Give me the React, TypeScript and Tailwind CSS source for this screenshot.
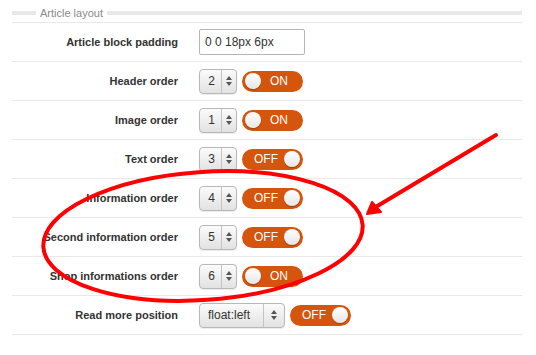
import React from "react";

function Spinner({ value, wide }: { value: string; wide?: boolean }) {
  return (
    <div
      className={
        "flex h-[25px] items-stretch rounded-[4px] border border-[#b8b8b8] bg-gradient-to-b from-[#fbfbfb] to-[#e2e2e2] shadow-[0_1px_1px_rgba(0,0,0,0.08)] " +
        (wide ? "w-[86px]" : "w-[38px]")
      }
    >
      <div
        className={
          "flex items-center text-[12px] text-[#333] " +
          (wide ? "w-[63px] pl-[8px]" : "w-[21px] justify-center pl-[2px]")
        }
      >
        {value}
      </div>
      <div className="w-px bg-[#c4c4c4]" />
      <div className="flex flex-1 flex-col items-center justify-center gap-[2px]">
        <svg width="6" height="4" viewBox="0 0 6 4">
          <path d="M3 0 L6 4 L0 4 Z" fill="#555" />
        </svg>
        <svg width="6" height="4" viewBox="0 0 6 4">
          <path d="M0 0 L6 0 L3 4 Z" fill="#555" />
        </svg>
      </div>
    </div>
  );
}

function Toggle({ on }: { on: boolean }) {
  return (
    <div className="flex h-[21px] w-[61px] items-center rounded-full bg-[#d6550c] px-[3px]">
      {on ? (
        <>
          <div className="h-[16px] w-[16px] rounded-full bg-gradient-to-b from-white to-[#e6e6e6] shadow-[0_1px_1px_rgba(0,0,0,0.3)]" />
          <span className="ml-[9px] text-[12px] text-white">ON</span>
        </>
      ) : (
        <>
          <span className="ml-[9px] text-[12px] text-white">OFF</span>
          <div className="ml-auto h-[16px] w-[16px] rounded-full bg-gradient-to-b from-white to-[#e6e6e6] shadow-[0_1px_1px_rgba(0,0,0,0.3)]" />
        </>
      )}
    </div>
  );
}

function Row({ label, children }: { label: string; children: React.ReactNode }) {
  return (
    <div className="flex h-[39px] items-center border-b border-[#e9e9e9]">
      <div className="w-[166px] text-right text-[11px] font-bold text-[#333]">{label}</div>
      <div className="ml-[21px] flex items-center gap-[5px]">{children}</div>
    </div>
  );
}

export default function App() {
  const rows: { label: string; n: string; on: boolean }[] = [
    { label: "Header order", n: "2", on: true },
    { label: "Image order", n: "1", on: true },
    { label: "Text order", n: "3", on: false },
    { label: "Information order", n: "4", on: false },
    { label: "Second information order", n: "5", on: false },
    { label: "Shop informations order", n: "6", on: true },
  ];
  return (
    <div className="relative h-[355px] w-[536px] overflow-hidden bg-white font-['Liberation_Sans',Arial,sans-serif]">
      <div className="ml-[12px] w-[510px]">
        <div className="flex h-[23px] items-center border-b border-[#e9e9e9] pt-[4px]">
          <div className="h-[4px] w-[24px] bg-[#e8e8e8]" />
          <span className="px-[4px] text-[11px] text-[#8a8a8a]">Article layout</span>
          <div className="h-[4px] flex-1 bg-[#e8e8e8]" />
        </div>
        <Row label="Article block padding">
          <div className="flex h-[26px] w-[106px] items-center rounded-[2px] border border-[#b5b5b5] bg-white pl-[5px] text-[12px] text-[#333]">
            0 0 18px 6px
          </div>
        </Row>
        {rows.map((r) => (
          <Row key={r.label} label={r.label}>
            <Spinner value={r.n} />
            <Toggle on={r.on} />
          </Row>
        ))}
        <Row label="Read more position">
          <Spinner value="float:left" wide />
          <Toggle on={false} />
        </Row>
      </div>
      <svg
        className="pointer-events-none absolute left-0 top-0"
        width="536"
        height="355"
        viewBox="0 0 536 355"
      >
        <ellipse
          cx="203"
          cy="236"
          rx="160"
          ry="64"
          transform="rotate(-4 203 236)"
          fill="none"
          stroke="#ff0000"
          strokeWidth="4"
        />
        <line x1="496" y1="135" x2="374" y2="208" stroke="#ff0000" strokeWidth="4" strokeLinecap="round" />
        <path d="M367 214 L372 202 L381 212 Z" fill="#ff0000" stroke="#ff0000" strokeWidth="2" strokeLinejoin="round" />
      </svg>
    </div>
  );
}
